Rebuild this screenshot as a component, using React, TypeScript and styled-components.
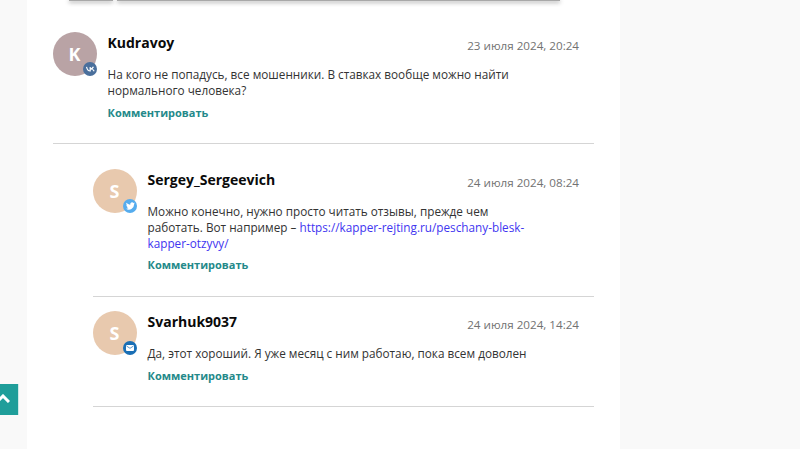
import React from "react";
import styled, { createGlobalStyle } from "styled-components";

const Global = createGlobalStyle`
  html, body { margin: 0; padding: 0; height: 449px; overflow: hidden; background: #f9f9f9; }
  body { font-family: "Open Sans", "Noto Sans", sans-serif; }
`;
const Panel = styled.main`
  width: 593px;
  height: 449px;
  margin-left: 27px;
  background: #fff;
  padding: 0 26px;
  box-sizing: border-box;
  overflow: hidden;
`;
const TopBars = styled.div`
  display: flex;
  gap: 4px;
  height: 1px;
  margin: 0 34px 31px 16px;
`;
const TopBar = styled.div<{ $w?: number }>`
  height: 1px;
  flex: ${(p) => (p.$w ? `0 0 ${p.$w}px` : "1")};
  background: #a8a8a8;
  box-shadow: 0 1px 4px rgba(0, 0, 0, 0.8);
`;
const Comment = styled.article<{ $reply?: boolean; $h: number }>`
  display: flex;
  gap: 10.5px;
  height: ${(p) => p.$h}px;
  margin-left: ${(p) => (p.$reply ? 40 : 0)}px;
  margin-bottom: ${(p) => (p.$reply ? 14 : 25)}px;
  padding-right: 15px;
  border-bottom: 1px solid #d5d5d5;
`;
const Avatar = styled.div<{ $bg: string }>`
  position: relative;
  flex: 0 0 44px;
  height: 44px;
  padding-right: 1px;
  box-sizing: border-box;
  border-radius: 50%;
  background: ${(p) => p.$bg};
  color: #fff;
  font-size: 18px;
  font-weight: 700;
  display: flex;
  align-items: center;
  justify-content: center;
`;
const Badge = styled.span<{ $bg: string }>`
  position: absolute;
  right: 0;
  bottom: 0;
  width: 14px;
  height: 14px;
  border-radius: 50%;
  background: ${(p) => p.$bg};
  display: flex;
  align-items: center;
  justify-content: center;
`;
const Body = styled.div`
  flex: 1;
  min-width: 0;
`;
const Head = styled.header`
  display: flex;
  justify-content: space-between;
  align-items: flex-start;
  height: 35px;
`;
const Name = styled.div`
  font-size: 14px;
  font-weight: 700;
  line-height: 22px;
  color: #0a0a0a;
`;
const DateText = styled.time`
  font-size: 11.65px;
  line-height: 16px;
  margin-top: 6px;
  color: #727272;
`;
const Text = styled.p`
  margin: 0;
  padding-right: 41px;
  font-size: 11.75px;
  line-height: 15.8px;
  color: #333;
`;
const Link = styled.a`
  color: #3f36f0;
  text-decoration: none;
`;
const Action = styled.div`
  margin-top: 6px;
  font-size: 11px;
  font-weight: 700;
  line-height: 16px;
  color: #24898a;
`;
const ScrollTop = styled.button`
  position: fixed;
  left: -15px;
  top: 384px;
  width: 34px;
  height: 31px;
  padding: 0 0 3px 3px;
  border: 0;
  border-right: 1px solid #cfe9e8;
  background: #1f9e9a;
  display: flex;
  align-items: center;
  justify-content: center;
`;

const Vk = () => (
  <svg width="9" height="6" viewBox="0 0 9 6" fill="none" stroke="#fff" strokeWidth="1.2">
    <path d="M.5.8C1 3.5 2.5 5 4.2 5V1M4.2 3C6 3 7 2 7.4.8M5 3c1.500.2 2.600 1 3.200 2.200" />
  </svg>
);
const Bird = () => (
  <svg width="9" height="8" viewBox="0 0 24 20" fill="#fff">
    <path d="M23.600 2.600c-.9.4-1.800.6-2.800.8 1-.6 1.800-1.600 2.200-2.700-1 .6-2 1-3.100 1.200A4.900 4.900 0 0 0 11.500 6.400C7.400 6.200 3.800 4.300 1.400 1.300.1 3.500.7 6.400 2.900 7.800c-.8 0-1.500-.2-2.200-.6 0 2.300 1.700 4.300 3.900 4.800-.7.2-1.500.2-2.200.1.600 2 2.400 3.400 4.600 3.400A9.900 9.900 0 0 1 0 17.500 14 14 0 0 0 21.500 5c1-.7 1.500-1.500 2.100-2.400z" />
  </svg>
);
const Mail = () => (
  <svg width="8" height="6" viewBox="0 0 8 6">
    <rect width="8" height="6" rx="1" fill="#fff" />
    <path d="M.5 1 4 3.300 7.500 1" fill="none" stroke="#1a6fb5" strokeWidth=".7" />
  </svg>
);
const Up = () => (
  <svg width="14" height="9" viewBox="0 0 14 9">
    <path d="M1 8 7 2l6 6" fill="none" stroke="#fff" strokeWidth="3" />
  </svg>
);

export default function App() {
  return (
    <>
      <Global />
      <Panel>
        <TopBars>
          <TopBar $w={44} />
          <TopBar />
        </TopBars>
        <Comment $h={111}>
          <Avatar $bg="#b9a3a5">
            K
            <Badge $bg="#4a6f9c"><Vk /></Badge>
          </Avatar>
          <Body>
            <Head>
              <Name>Kudravoy</Name>
              <DateText>23 июля 2024, 20:24</DateText>
            </Head>
            <Text>На кого не попадусь, все мошенники. В ставках вообще можно найти нормального человека?</Text>
            <Action>Комментировать</Action>
          </Body>
        </Comment>
        <Comment $reply $h={127}>
          <Avatar $bg="#e8c9ae">
            S
            <Badge $bg="#55acee"><Bird /></Badge>
          </Avatar>
          <Body>
            <Head>
              <Name>Sergey_Sergeevich</Name>
              <DateText>24 июля 2024, 08:24</DateText>
            </Head>
            <Text>
              Можно конечно, нужно просто читать отзывы, прежде чем работать. Вот например – <Link>https://kapper-rejting.ru/peschany-blesk-kapper-otzyvy/</Link>
            </Text>
            <Action>Комментировать</Action>
          </Body>
        </Comment>
        <Comment $reply $h={95}>
          <Avatar $bg="#e8c9ae">
            S
            <Badge $bg="#1a6fb5"><Mail /></Badge>
          </Avatar>
          <Body>
            <Head>
              <Name>Svarhuk9037</Name>
              <DateText>24 июля 2024, 14:24</DateText>
            </Head>
            <Text>Да, этот хороший. Я уже месяц с ним работаю, пока всем доволен</Text>
            <Action>Комментировать</Action>
          </Body>
        </Comment>
      </Panel>
      <ScrollTop aria-label="Наверх"><Up /></ScrollTop>
    </>
  );
}
